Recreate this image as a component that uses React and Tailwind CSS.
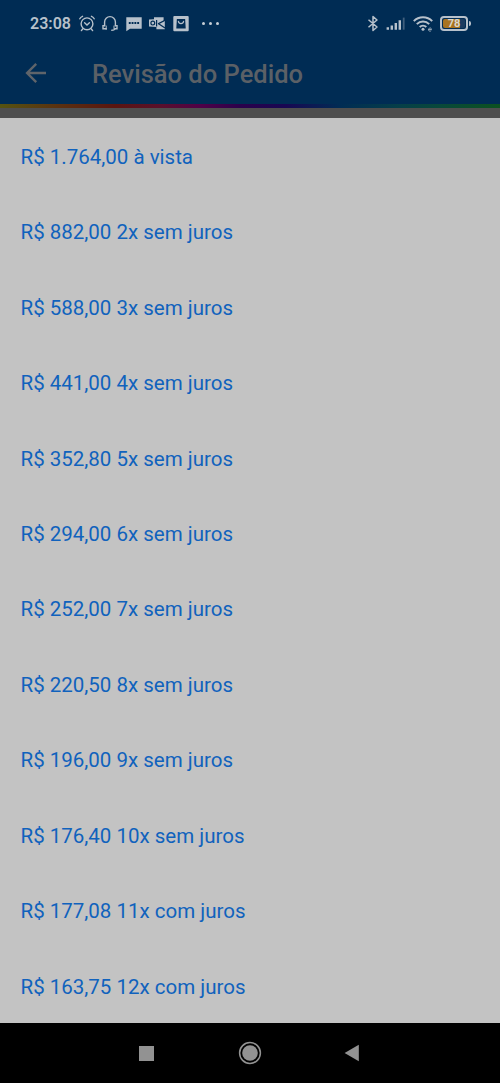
const installments = [
  { value: "R$ 1.764,00", label: "à vista" },
  { value: "R$ 882,00", label: "2x sem juros" },
  { value: "R$ 588,00", label: "3x sem juros" },
  { value: "R$ 441,00", label: "4x sem juros" },
  { value: "R$ 352,80", label: "5x sem juros" },
  { value: "R$ 294,00", label: "6x sem juros" },
  { value: "R$ 252,00", label: "7x sem juros" },
  { value: "R$ 220,50", label: "8x sem juros" },
  { value: "R$ 196,00", label: "9x sem juros" },
  { value: "R$ 176,40", label: "10x sem juros" },
  { value: "R$ 177,08", label: "11x com juros" },
  { value: "R$ 163,75", label: "12x com juros" },
];

const AlarmIcon = () => (
  <svg width="16" height="17" viewBox="0 0 16 17" fill="none" stroke="currentColor" strokeWidth="1.4" strokeLinecap="round">
    <circle cx="8" cy="8.8" r="5.9" />
    <path d="M.8 3.8C1.3 2.7 2.2 1.8 3.5 1.3M15.2 3.8c-.5-1.1-1.4-2-2.7-2.5M3.6 14 2.4 15.6M12.4 14l1.2 1.6M5.6 7.8 8 10l2.4-2.2" />
  </svg>
);

const HeadsetIcon = () => (
  <svg width="16" height="17" viewBox="0 0 16 17" fill="none" stroke="currentColor" strokeWidth="1.4" strokeLinecap="round">
    <path d="M2.6 10.8V7a5.4 5.4 0 0 1 10.8 0v3.8" />
    <path d="M2.6 10.6H1v3.2h3.2M13.4 10.6H15v3.2h-2.2" />
    <path d="M12.8 14c-.4 1-1.6 1.3-3 1.3" />
    <path d="M4.2 11v3.4M12 11v2.8" strokeWidth="1" />
  </svg>
);

const MessageIcon = () => (
  <svg width="16" height="17" viewBox="0 0 16 17">
    <path fill="currentColor" d="M.3 2.2h15.4v11.6H4L.3 16.2z" />
    <path fill="#002c54" d="M2.8 7h1.9v2H2.8zM5.6 7h1.9v2H5.6zM8.4 7h1.9v2H8.4zM11.2 7h1.9v2h-1.9z" />
  </svg>
);

const OutlookIcon = () => (
  <svg width="16" height="17" viewBox="0 0 16 17">
    <path fill="currentColor" d="M5 2.2h9.6v4l1.2-.5v8.5H7.4V12L0 11.6V4.6l5-.4z" />
    <circle cx="3.8" cy="8.1" r="1.9" fill="none" stroke="#002c54" strokeWidth="1.2" />
    <path d="M7.6 5v6.5M16 5.4 9 8.9M9.2 8.6 16 13" fill="none" stroke="#002c54" strokeWidth="1.2" />
  </svg>
);

const BagIcon = () => (
  <svg width="16" height="17" viewBox="0 0 16 17">
    <rect x=".3" y=".9" width="15.4" height="15.4" rx="1" fill="currentColor" />
    <path d="M3.9 4h8.2l.6 9.4H3.3z" fill="#002c54" />
    <path d="M5.4 6.4c.6 3 4.6 3 5.2 0" fill="none" stroke="currentColor" strokeWidth="1.2" strokeLinecap="round" />
  </svg>
);

const BluetoothIcon = () => (
  <svg width="12" height="17" viewBox="0 0 12 17" fill="none" stroke="currentColor" strokeWidth="1.5" strokeLinejoin="round">
    <path d="M1.5 4.7 10 12l-4 3.5v-14l4 3.5-8.5 7.3" />
  </svg>
);

const SignalIcon = () => (
  <svg width="20" height="17" viewBox="0 0 20 17" fill="currentColor">
    <path d="M.6 12.2h2.4v2.5H.6zM4.6 10.4H7v4.3H4.6zM8.6 8H11v6.7H8.6zM12.6 5.2H15v9.5h-2.4z" />
    <path d="M16.8 2.6h1.8v12.1h-1.8z" opacity=".35" />
  </svg>
);

const WifiIcon = () => (
  <svg width="20" height="17" viewBox="0 0 20 17" fill="none" stroke="currentColor" strokeWidth="2">
    <path d="M.8 6.1a13 13 0 0 1 18.4 0M3.8 9.1a8.8 8.8 0 0 1 12.4 0M6.7 12a4.7 4.7 0 0 1 6.6 0" />
    <circle cx="10" cy="14.2" r="1.5" fill="currentColor" stroke="none" />
    <path d="M15.5 14.5h3c0-2.2-3-1.9-3 .2 0 1.6 1.9 1.8 2.7 1" strokeWidth=".8" />
  </svg>
);

const Battery = () => (
  <div className="flex items-center">
    <div className="h-[15px] w-[28px] rounded-[4px] border-2 border-[#b7c1cb] p-px">
      <div className="flex h-full w-full items-center justify-center rounded-[2px] bg-linear-to-r from-[#a87320] from-78% to-[#1b3b5f] to-78% text-[11px] leading-none font-bold text-[#dad7cd]">
        78
      </div>
    </div>
    <div className="ml-px h-[5px] w-[2px] rounded-r-sm bg-[#b7c1cb]" />
  </div>
);

const StatusBar = () => (
  <div className="flex h-[46px] items-center justify-between pr-[29px] pl-[30px] text-[#b7c1cb]">
    <div className="flex items-center gap-[7.5px]">
      <span className="mt-px w-[41px] text-[16px] leading-none font-semibold whitespace-nowrap">23:08</span>
      <AlarmIcon />
      <HeadsetIcon />
      <MessageIcon />
      <OutlookIcon />
      <BagIcon />
      <div className="ml-[6px] flex gap-[4px]">
        <span className="size-[3px] rounded-full bg-[#c5ced6]" />
        <span className="size-[3px] rounded-full bg-[#c5ced6]" />
        <span className="size-[3px] rounded-full bg-[#c5ced6]" />
      </div>
    </div>
    <div className="flex items-center gap-[7px]">
      <BluetoothIcon />
      <SignalIcon />
      <WifiIcon />
      <Battery />
    </div>
  </div>
);

const Header = () => (
  <div className="flex h-[58px] items-center pl-[25px]">
    <svg width="22" height="20" viewBox="0 0 22 20" fill="none" stroke="#5f646a" strokeWidth="2.4" className="-mt-1">
      <path d="M21 10H2.4M11.2 .9 2.1 10l9.1 9.1" />
    </svg>
    <h1 className="ml-[45px] text-[25.5px] leading-none font-medium text-[#5b6066]">
      Revisão do Pedido
    </h1>
  </div>
);

const NavBar = () => (
  <div className="flex h-[60px] items-center bg-black pl-[139px] text-[#929292]">
    <div className="size-[15px] bg-[#929292]" />
    <svg width="24" height="24" viewBox="0 0 24 24" className="ml-[84px]">
      <circle cx="12" cy="12" r="10.4" fill="none" stroke="currentColor" strokeWidth="1.5" />
      <circle cx="12" cy="12" r="7.8" fill="currentColor" />
    </svg>
    <svg width="15" height="18" viewBox="0 0 15 18" className="ml-[82px]">
      <path d="M14.8.8v16.4L.6 9z" fill="currentColor" />
    </svg>
  </div>
);

const App = () => {
  return (
    <div className="flex h-[1083px] w-[500px] flex-col overflow-hidden bg-[#4e4e4e] font-[Roboto,sans-serif]">
      <div className="bg-[#002c54]">
        <StatusBar />
        <Header />
        {/* Rainbow strip under the app bar */}
        <div className="h-[4px] bg-[linear-gradient(90deg,#555311_0%,#5a3010_12%,#5a1510_23%,#59102b_32%,#500047_40%,#2b004b_48%,#180752_57%,#002c54_68%,#063f48_80%,#08483a_88%,#0c5120_100%)]" />
      </div>

      <ul className="mt-[10px] flex flex-1 flex-col bg-[#c3c3c3]">
        {installments.map((item) => (
          <li
            key={item.label}
            className="flex flex-1 items-center pt-[3px] pl-[20.5px] text-[20.5px] leading-none text-[#1062bd]"
          >
            {item.value} {item.label}
          </li>
        ))}
      </ul>

      <NavBar />
    </div>
  );
};

export default App;
